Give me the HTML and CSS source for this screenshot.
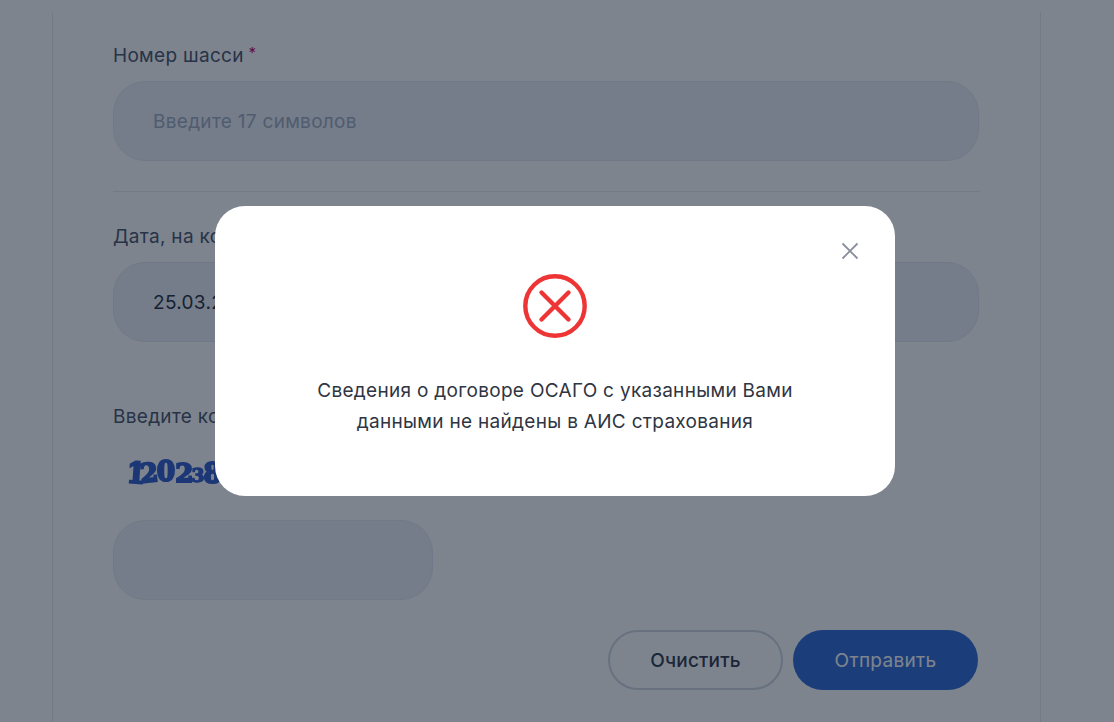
FILE: index.html
```html
<!DOCTYPE html>
<html lang="ru">
<head>
<meta charset="utf-8">
<title>Проверка ОСАГО</title>
<link rel="stylesheet" href="styles.css">
</head>
<body>
<main class="card">
  <div class="field">
    <label class="label">Номер шасси <span class="req">*</span></label>
    <div class="input placeholder">Введите 17 символов</div>
  </div>
  <hr class="divider">
  <div class="field">
    <label class="label">Дата, на которую запрашиваются сведения</label>
    <div class="input">25.03.2025</div>
  </div>
  <div class="field captcha-field">
    <label class="label">Введите код с картинки</label>
    <div class="captcha"><span class="d1">1</span><span class="d2">2</span><span class="d3">0</span><span class="d4">2</span><span class="d5">3</span><span class="d6">8</span></div>
    <div class="input short"></div>
  </div>
  <div class="actions">
    <button class="btn ghost">Очистить</button>
    <button class="btn primary">Отправить</button>
  </div>
</main>
<div class="overlay">
  <div class="modal">
    <button class="close" aria-label="Закрыть">
      <svg width="20" height="20" viewBox="0 0 20 20"><path d="M2.5 2.5L17.5 17.5M17.5 2.5L2.5 17.5" stroke="#8a8f9c" stroke-width="1.8" fill="none"/></svg>
    </button>
    <svg class="err" width="64" height="64" viewBox="0 0 64 64"><circle cx="32" cy="32" r="29.7" stroke="#ee3535" stroke-width="4.4" fill="none"/><path d="M18.5 18.5L45.5 45.5M45.5 18.5L18.5 45.5" stroke="#ee3535" stroke-width="4.4" stroke-linecap="round" fill="none"/></svg>
    <p class="msg">Сведения о договоре ОСАГО с указанными Вами<br>данными не найдены в АИС страхования</p>
  </div>
</div>
</body>
</html>
```
FILE: styles.css
```css
* { box-sizing: border-box; }
html, body { margin: 0; height: 100%; overflow: hidden; background: #fff; }
body { font-family: "Inter", "Noto Sans", sans-serif; color: #2f3542; letter-spacing: .3px; }
.card {
  margin: 12px 52px 0;
  padding: 28px 60px 0;
  border-left: 1px solid #e8ebf0;
  border-right: 1px solid #e8ebf0;
  height: 710px;
  width: 989px;
}
.label { display: block; font-size: 19px; line-height: 26px; color: #525a6e; }
.req { color: #c2185b; font-size: 15px; vertical-align: 4px; margin-left: -1px; }
.input {
  margin-top: 12px;
  height: 80px;
  width: 866px;
  border: 1px solid #e6e9f3;
  border-radius: 32px;
  background: #eff0f6;
  padding: 0 39px;
  display: flex;
  align-items: center;
  font-size: 19px;
  color: #2f3542;
}
.placeholder { color: #a3adc0; }
.short { width: 320px; margin-top: 27px; }
.divider { border: 0; border-top: 1px solid #e8ebf0; margin: 30px 0 32px; width: 867px; }
.captcha-field { margin-top: 62px; }
.captcha {
  margin-top: 18px;
  margin-left: 14px;
  padding-top: 4px;
  height: 45px;
  display: flex;
  align-items: center;
  font-family: "DejaVu Serif", serif;
  font-weight: 700;
  font-size: 26px;
  color: #3a62cf;
  -webkit-text-stroke: 2px #3a62cf;
  letter-spacing: -1px;
  filter: blur(.4px);
}
.d1 { transform: rotate(4deg) scaleY(1.1); margin-right: -4px; }
.d2 { transform: rotate(-6deg); margin-right: -1px; }
.d3 { transform: translateY(-2px) scale(1.02, 1.1); margin: 0 1px; }
.d4 { transform: scaleX(1); }
.d5 { transform: scale(.72) translateY(3px); margin: 0 -3px; }
.d6 { transform: scale(1, 1.1); }
.actions { display: flex; justify-content: flex-end; gap: 10px; margin-top: 30px; width: 865px; }
.btn {
  height: 60px;
  border-radius: 30px;
  font-family: inherit;
  font-size: 19px;
  letter-spacing: .3px;
  cursor: pointer;
}
.ghost { width: 175px; background: transparent; border: 2px solid #d2d9e2; color: #3a4150; font-weight: 500; letter-spacing: .15px; }
.primary { width: 185px; border: 0; background: #3871d7; color: #fff; font-weight: 400; }
.overlay {
  position: fixed;
  inset: 0;
  background: rgba(0, 13, 33, .51);
  display: flex;
  align-items: flex-start;
  justify-content: center;
}
.modal {
  position: relative;
  margin-top: 206px;
  margin-left: -4px;
  width: 680px;
  height: 290px;
  background: #fff;
  border-radius: 30px;
  padding-top: 68px;
  display: flex;
  flex-direction: column;
  align-items: center;
}
.close {
  position: absolute;
  top: 35px;
  right: 35px;
  padding: 0;
  width: 20px;
  height: 20px;
  border: 0;
  background: none;
  line-height: 0;
}
.msg {
  margin: 37px 0 0;
  text-align: center;
  font-size: 19px;
  line-height: 31px;
  color: #2f3542;
}
```
